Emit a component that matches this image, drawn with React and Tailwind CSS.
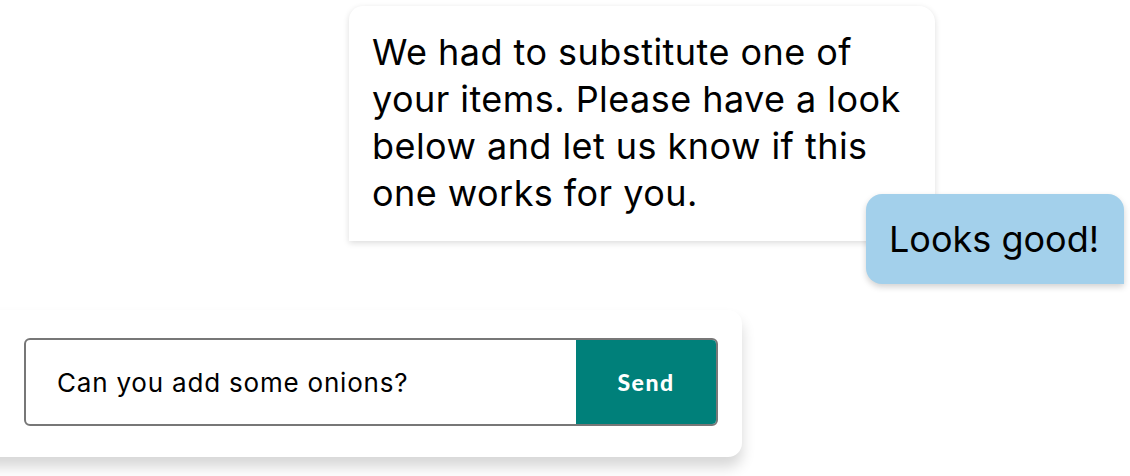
export default function App() {
  return (
    <div className="w-[1130px] h-[476px] bg-white overflow-hidden" style={{ fontFamily: 'Inter, "Noto Sans", sans-serif' }}>
      <div className="flex items-start pt-[6px] pl-[349px]">
        <div className="w-[586px] h-[235px] shrink-0 bg-white rounded-tl-[14px] rounded-tr-[16px] shadow-[0_2px_6px_rgba(0,0,0,0.14)] pl-[23px] pt-[23px] text-[36px] leading-[47px] tracking-[0.45px] text-black whitespace-nowrap">
          We had to substitute one of<br />
          your items. Please have a look<br />
          below and let us know if this<br />
          one works for you.
        </div>
        <div className="relative shrink-0 -ml-[69px] mt-[188px] w-[258px] h-[90px] bg-[#a3d0eb] rounded-tl-[16px] rounded-tr-[16px] rounded-bl-[16px] shadow-[0_3px_6px_rgba(0,0,0,0.18)] flex items-center pl-[23px] text-[36px] text-black whitespace-nowrap">
          Looks good!
        </div>
      </div>
      <div className="mt-[26px] -ml-[20px] w-[762px] h-[147px] bg-white rounded-r-[14px] shadow-[0_10px_14px_rgba(0,0,0,0.16)] pl-[44px] pt-[28px]">
        <div className="flex w-[694px] h-[88px] border-2 border-[#777777] rounded-[6px] overflow-hidden">
          <div className="flex-1 flex items-center pl-[31px] text-[26px] tracking-[0.8px] text-black">Can you add some onions?</div>
          <div className="w-[140px] bg-[#00807a] flex items-center justify-center text-white text-[23px] font-black tracking-[1.5px]" style={{ fontFamily: 'Lato, sans-serif' }}>Send</div>
        </div>
      </div>
    </div>
  );
}
